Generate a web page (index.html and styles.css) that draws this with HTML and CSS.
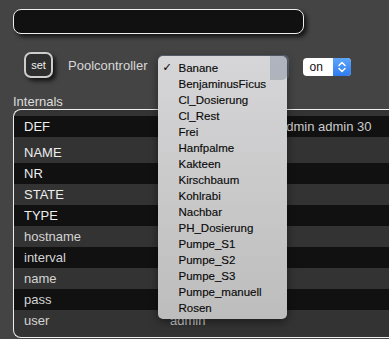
FILE: index.html
```html
<!DOCTYPE html>
<html lang="de">
<head>
    <meta charset="UTF-8">
    <meta name="viewport" content="width=device-width, initial-scale=1.0">
    <title>Poolcontroller</title>
    <link rel="stylesheet" href="styles.css">
</head>
<body>

    <div class="name-bar"></div>

    <div class="controls">
        <div class="set-btn">set</div>
        <span class="dev-label">Poolcontroller</span>
        <div class="picker">
            <div class="picker-face"></div>
            <div class="menu">
                <div class="menu-shade"></div>
                <div class="menu-item checked">Banane</div>
                <div class="menu-item">BenjaminusFicus</div>
                <div class="menu-item">Cl_Dosierung</div>
                <div class="menu-item">Cl_Rest</div>
                <div class="menu-item">Frei</div>
                <div class="menu-item">Hanfpalme</div>
                <div class="menu-item">Kakteen</div>
                <div class="menu-item">Kirschbaum</div>
                <div class="menu-item">Kohlrabi</div>
                <div class="menu-item">Nachbar</div>
                <div class="menu-item">PH_Dosierung</div>
                <div class="menu-item">Pumpe_S1</div>
                <div class="menu-item">Pumpe_S2</div>
                <div class="menu-item">Pumpe_S3</div>
                <div class="menu-item">Pumpe_manuell</div>
                <div class="menu-item">Rosen</div>
            </div>
        </div>
        <div class="state-select">
            <span class="state-value">on</span>
            <span class="state-arrows">
                <svg width="10" height="14" viewBox="0 0 10 14">
                    <path d="M2 5.5 L5 2.5 L8 5.5 M2 8.5 L5 11.5 L8 8.5" fill="none" stroke="#fff" stroke-width="1.5" stroke-linecap="round" stroke-linejoin="round"/>
                </svg>
            </span>
        </div>
    </div>

    <div class="section-title">Internals</div>
    <div class="internals">
        <div class="row dark"><span class="key">DEF</span><span class="val def-val">admin admin 30</span></div>
        <div class="row spaced"><span class="key">NAME</span></div>
        <div class="row dark"><span class="key">NR</span></div>
        <div class="row"><span class="key">STATE</span></div>
        <div class="row dark"><span class="key">TYPE</span></div>
        <div class="row"><span class="key lower">hostname</span></div>
        <div class="row dark"><span class="key lower">interval</span></div>
        <div class="row"><span class="key lower">name</span></div>
        <div class="row dark"><span class="key lower">pass</span></div>
        <div class="row"><span class="key lower">user</span><span class="val">admin</span></div>
    </div>

</body>
</html>
```

FILE: styles.css
```css
html, body {
    overflow: hidden;
}
body {
    margin: 0;
    padding: 9px 0 0 13px;
    background-color: #444;
    font-family: "Liberation Sans", Arial, sans-serif;
    color: #ddd;
}
.name-bar {
    width: 289px;
    height: 23px;
    background-color: #111;
    border: 1px solid #eee;
    border-radius: 8px;
    box-shadow: 3px 3px 4px rgba(0, 0, 0, 0.7);
}
.controls {
    display: flex;
    align-items: flex-start;
    height: 26px;
    margin-top: 18px;
    padding-left: 11px;
}
.set-btn {
    width: 25px;
    height: 22px;
    border: 2px solid #ccc;
    border-radius: 7px;
    background-color: #2e2e2e;
    color: #eee;
    font-size: 11px;
    display: flex;
    align-items: center;
    justify-content: center;
    box-shadow: 3px 3px 4px rgba(0, 0, 0, 0.7);
}
.dev-label {
    margin-left: 15px;
    margin-top: 6px;
    font-size: 13px;
    line-height: 15px;
    color: #d8d8d8;
}
.picker {
    position: relative;
    width: 131px;
    height: 25px;
    margin-left: 10px;
    margin-top: 3px;
}
.picker-face {
    height: 25px;
    border-radius: 5px;
    background-color: #5b6470;
}
.menu {
    position: absolute;
    left: 0;
    top: 1px;
    z-index: 2;
    width: 129px;
    padding: 4px 0 3px;
    border-radius: 5px;
    background: linear-gradient(#d6d6d8, #bdbdbd);
    box-shadow: 0 3px 10px rgba(0, 0, 0, 0.45);
}
.menu-shade {
    position: absolute;
    right: 0;
    top: -1px;
    width: 17px;
    height: 25px;
    border-radius: 0 5px 5px 0;
    background-color: rgba(60, 80, 110, 0.25);
}
.menu-item {
    position: relative;
    height: 16px;
    line-height: 16px;
    padding-left: 21px;
    font-size: 11.5px;
    color: #0a0a0a;
    -webkit-text-stroke: 0.15px #0a0a0a;
}
.menu-item.checked::before {
    content: "\2713";
    position: absolute;
    left: 5px;
    font-family: "DejaVu Sans", sans-serif;
    font-size: 11px;
    font-weight: bold;
}
.state-select {
    display: flex;
    width: 48px;
    height: 18px;
    margin-left: 14px;
    margin-top: 6px;
    border-radius: 4px;
    background-color: #fff;
    overflow: hidden;
}
.state-value {
    flex: 1;
    padding-left: 7px;
    font-size: 12px;
    line-height: 18px;
    color: #111;
}
.state-arrows {
    width: 18px;
    display: flex;
    align-items: center;
    justify-content: center;
    background: linear-gradient(#5ea6f8, #2f7cf0);
}
.section-title {
    margin-top: 16px;
    font-size: 13px;
    line-height: 15px;
    color: #ddd;
}
.internals {
    width: 420px;
    padding: 6px 0 6px;
    background-color: #333;
    border: 1px solid #eee;
    border-right: none;
    border-radius: 8px 0 0 8px;
}
.row {
    display: flex;
    align-items: center;
    height: 21px;
    box-sizing: border-box;
    font-size: 13px;
}
.row.dark {
    background-color: #111;
}
.row.spaced {
    height: 26px;
    padding-top: 5px;
}
.key {
    width: 146px;
    padding-left: 10px;
    color: #eee;
}
.key.lower {
    color: #d4d4d4;
}
.val {
    color: #ccc;
}
.val.def-val {
    margin-left: 109px;
}
```
